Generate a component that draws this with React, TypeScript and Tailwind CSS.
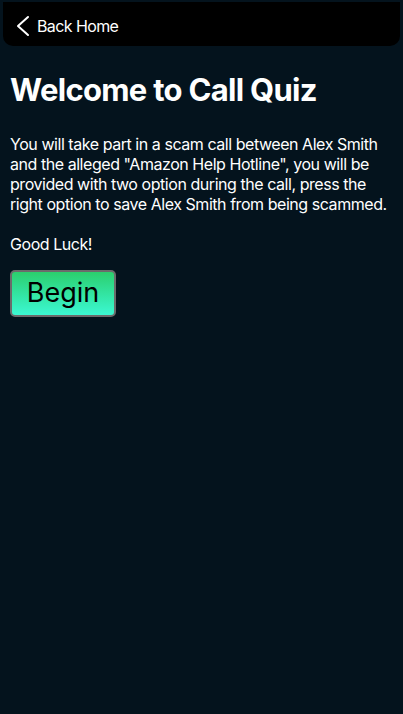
export default function App() {
  return (
    <div className="min-h-[714px] w-full bg-[#04131d] text-white" style={{ fontFamily: 'Inter, "Noto Sans", sans-serif' }}>
      <div className="mx-[3px] pt-[2px]">
        <div className="flex h-[44px] items-center rounded-b-[10px] bg-black pl-[13px] pt-[3px]">
          <svg width="14" height="22" viewBox="0 0 14 22" fill="none" stroke="white" strokeWidth="2" strokeLinecap="round" strokeLinejoin="round">
            <polyline points="12,2 2,11 12,20" />
          </svg>
          <span className="ml-[7px] text-[16px] tracking-[-0.6px]">Back Home</span>
        </div>
      </div>

      <div className="px-[10px]">
        <h1 className="mt-[25px] text-[31px] font-bold leading-[38px] tracking-[-0.7px]">Welcome to Call Quiz</h1>
        <p className="mt-[25px] text-[16px] leading-[20px] tracking-[-0.45px]">
          You will take part in a scam call between Alex Smith and the alleged "Amazon Help Hotline", you will be provided with two option during the call, press the right option to save Alex Smith from being scammed.
          <br />
          <br />
          Good Luck!
        </p>
        <button className="mt-[16px] h-[47px] w-[106px] rounded-[5px] border-2 border-[#6b6b6b] bg-gradient-to-b from-[#2ccf6c] to-[#3cf8d2] text-[27px] text-black">
          Begin
        </button>
      </div>
    </div>
  )
}
